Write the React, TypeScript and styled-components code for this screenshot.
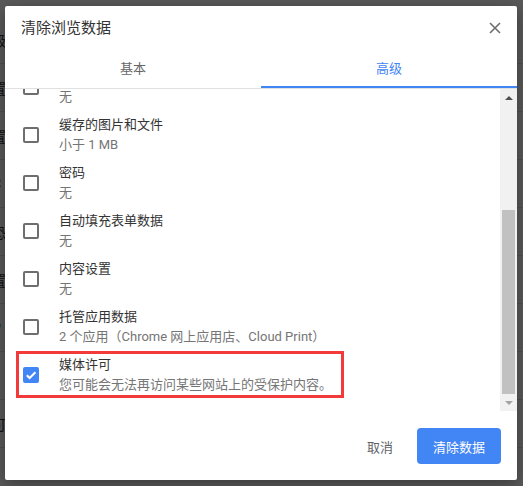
import React, { useLayoutEffect, useRef, useState } from 'react';
import styled, { createGlobalStyle } from 'styled-components';

const GlobalStyle = createGlobalStyle`
  html, body {
    margin: 0;
    padding: 0;
  }
  body {
    width: 523px;
    height: 486px;
    overflow: hidden;
    background: #fff;
    font-family: Roboto, "Noto Sans CJK SC", sans-serif;
  }
`;

const Screen = styled.div`
  position: relative;
  width: 523px;
  height: 486px;
  overflow: hidden;
`;

/* settings page behind the dialog, only its edges show */
const BackPage = styled.div`
  display: flex;
  flex-direction: column;
  padding-top: 16px;
`;

const BackRow = styled.div`
  height: 48px;
  display: flex;
  align-items: center;
  border-bottom: 1px solid #e0e0e0;
  box-sizing: border-box;
`;

const BackText = styled.span`
  margin-left: -8px;
  font-size: 14px;
  color: #333;
`;

const BackFooter = styled.div`
  margin-top: -6px;
  margin-left: -8px;
  font-size: 13px;
  color: #444;
  white-space: nowrap;
`;

const Overlay = styled.div`
  position: absolute;
  inset: 0;
  background: rgba(0, 0, 0, 0.65);
`;

const Dialog = styled.div`
  position: absolute;
  left: 5px;
  top: 6px;
  width: 512px;
  height: 474px;
  background: #fff;
  border-radius: 2px;
  box-shadow: 0 4px 16px rgba(0, 0, 0, 0.35);
  display: flex;
  flex-direction: column;
  overflow: hidden;
`;

const Header = styled.div`
  display: flex;
  align-items: center;
  justify-content: space-between;
  padding: 12px 16px 8px 16px;
`;

const Title = styled.h2`
  margin: 0;
  font-size: 15px;
  font-weight: 400;
  line-height: 20px;
  color: #333;
`;

const CloseButton = styled.button`
  border: none;
  background: none;
  padding: 0;
  width: 12px;
  height: 12px;
  display: flex;
  cursor: pointer;
`;

const Tabs = styled.div`
  display: flex;
  height: 43px;
  border-bottom: 1px solid #e0e0e0;
  box-sizing: border-box;
`;

const Tab = styled.div<{ active?: boolean }>`
  flex: 1;
  display: flex;
  align-items: center;
  justify-content: center;
  padding-top: 2px;
  font-size: 13px;
  color: ${p => (p.active ? '#4285f4' : '#666')};
  border-bottom: 2px solid ${p => (p.active ? '#4285f4' : 'transparent')};
`;

const Body = styled.div`
  display: flex;
  height: 322px;
`;

const List = styled.div`
  flex: 1;
  overflow-y: scroll;
  scrollbar-width: none;
  &::-webkit-scrollbar {
    display: none;
  }
`;

const ListInner = styled.div`
  padding: 12px 0;
`;

const Item = styled.div`
  position: relative;
  display: flex;
  align-items: center;
  gap: 20px;
  height: 48px;
  padding-left: 18px;
`;

const Highlight = styled.div`
  position: absolute;
  left: 11px;
  top: 0;
  width: 328px;
  height: 47px;
  border: 3px solid #f33a3a;
  box-sizing: border-box;
  pointer-events: none;
`;

const Checkbox = styled.span<{ checked?: boolean }>`
  flex: none;
  width: 16px;
  height: 16px;
  box-sizing: border-box;
  border-radius: 2px;
  border: 2px solid ${p => (p.checked ? '#4285f4' : '#6e6e6e')};
  background: ${p => (p.checked ? '#4285f4' : 'transparent')};
  display: flex;
  align-items: center;
  justify-content: center;
`;

const Texts = styled.div`
  display: flex;
  flex-direction: column;
`;

const Label = styled.div`
  font-size: 13px;
  line-height: 20px;
  color: #333;
  white-space: nowrap;
`;

const Sub = styled(Label)`
  color: #757575;
`;

const TimeRow = styled.div`
  display: flex;
  align-items: center;
  justify-content: space-between;
  height: 48px;
  padding: 0 18px;
  font-size: 13px;
  color: #333;
`;

const ScrollBar = styled.div`
  width: 17px;
  flex: none;
  display: flex;
  flex-direction: column;
  background: #f1f1f1;
`;

const Arrow = styled.div<{ up?: boolean; disabled?: boolean }>`
  height: 17px;
  flex: none;
  display: flex;
  align-items: center;
  justify-content: center;
  &::before {
    content: '';
    width: 0;
    height: 0;
    border-left: 4px solid transparent;
    border-right: 4px solid transparent;
    ${p =>
      p.up
        ? `border-bottom: 4px solid ${p.disabled ? '#a3a3a3' : '#505050'};`
        : `border-top: 4px solid ${p.disabled ? '#a3a3a3' : '#505050'};`}
  }
`;

const Track = styled.div`
  flex: 1;
  position: relative;
`;

const Thumb = styled.div`
  position: absolute;
  left: 2px;
  right: 2px;
  background: #c1c1c1;
`;

const Footer = styled.div`
  display: flex;
  justify-content: flex-end;
  gap: 8px;
  padding: 17px 16px 16px;
`;

const Button = styled.button<{ primary?: boolean }>`
  height: 36px;
  padding: 0 16px;
  border: none;
  border-radius: 4px;
  font-family: Roboto, "Noto Sans CJK SC", sans-serif;
  font-size: 13px;
  cursor: pointer;
  background: ${p => (p.primary ? '#4285f4' : 'transparent')};
  color: ${p => (p.primary ? '#fff' : '#5f6368')};
`;

type Entry = { label: string; sub: string; checked?: boolean; marked?: boolean };

const entries: Entry[] = [
  { label: '浏览记录', sub: '无' },
  { label: '下载记录', sub: '无' },
  { label: 'Cookie 及其他网站数据', sub: '无' },
  { label: '缓存的图片和文件', sub: '小于 1 MB' },
  { label: '密码', sub: '无' },
  { label: '自动填充表单数据', sub: '无' },
  { label: '内容设置', sub: '无' },
  { label: '托管应用数据', sub: '2 个应用（Chrome 网上应用店、Cloud Print）' },
  { label: '媒体许可', sub: '您可能会无法再访问某些网站上的受保护内容。', checked: true, marked: true },
];

const backRows = ['级', '置', '置', 'C', '恐', '置', 'P', '', '可', ''];

const App: React.FC = () => {
  const listRef = useRef<HTMLDivElement>(null);
  const [thumb, setThumb] = useState({ top: 0, height: 0 });

  useLayoutEffect(() => {
    const el = listRef.current;
    if (!el) return;
    el.scrollTop = el.scrollHeight;
    const track = el.clientHeight - 34;
    const height = (el.clientHeight / el.scrollHeight) * track;
    const top = (el.scrollTop / el.scrollHeight) * track;
    setThumb({ top, height });
  }, []);

  return (
    <Screen>
      <GlobalStyle />
      <BackPage>
        {backRows.map((t, i) => (
          <BackRow key={i}>{t && <BackText>{t}</BackText>}</BackRow>
        ))}
        <BackFooter>记录、Cookie、缓存及其他数据</BackFooter>
      </BackPage>
      <Overlay />
      <Dialog>
        <Header>
          <Title>清除浏览数据</Title>
          <CloseButton aria-label="关闭">
            <svg width="12" height="12" viewBox="0 0 12 12">
              <path d="M1 1L11 11M11 1L1 11" stroke="#6e6e6e" strokeWidth="1.6" />
            </svg>
          </CloseButton>
        </Header>
        <Tabs>
          <Tab>基本</Tab>
          <Tab active>高级</Tab>
        </Tabs>
        <Body>
          <List ref={listRef}>
            <ListInner>
              <TimeRow>
                <span>时间范围</span>
                <span>时间不限</span>
              </TimeRow>
              {entries.map(e => (
                <Item key={e.label}>
                  <Checkbox checked={e.checked}>
                    {e.checked && (
                      <svg width="12" height="12" viewBox="0 0 12 12">
                        <path d="M1.8 6.2L4.6 9L10.4 3.2" fill="none" stroke="#fff" strokeWidth="2" />
                      </svg>
                    )}
                  </Checkbox>
                  <Texts>
                    <Label>{e.label}</Label>
                    <Sub>{e.sub}</Sub>
                  </Texts>
                  {e.marked && <Highlight />}
                </Item>
              ))}
            </ListInner>
          </List>
          <ScrollBar>
            <Arrow up />
            <Track>
              <Thumb style={{ top: thumb.top, height: thumb.height }} />
            </Track>
            <Arrow disabled />
          </ScrollBar>
        </Body>
        <Footer>
          <Button>取消</Button>
          <Button primary>清除数据</Button>
        </Footer>
      </Dialog>
    </Screen>
  );
};

export default App;
